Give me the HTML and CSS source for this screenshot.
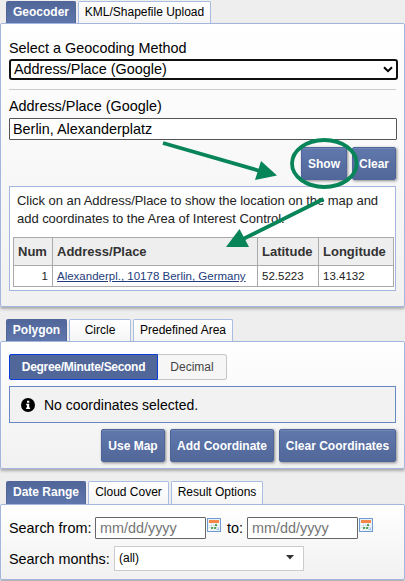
FILE: index.html
```html
<!DOCTYPE html>
<html lang="en">
<head>
<meta charset="utf-8">
<title>Search Criteria</title>
<link rel="stylesheet" href="styles.css">
</head>
<body>
<svg class="defs" width="0" height="0" aria-hidden="true">
  <symbol id="calendar" viewBox="0 0 14 14">
    <rect x=".5" y=".5" width="13" height="13" fill="#e8f0f9" stroke="#709bcf"/>
    <rect x="2" y="2" width="10" height="3" fill="#f58848"/>
    <path d="M2 5.500h10v5L10.500 12H2z" fill="#fff"/>
    <path d="M2 7.500h10M2 9.500h10M4.500 5v7M7 5v7M9.500 5v7" stroke="#b9cee4" stroke-width=".6"/>
    <path d="M8 6h2v2H8zM4 9h2v2H4zM7 9h2v2H7z" fill="#55a553"/>
    <path d="M12 9.500V12H9.500z" fill="#9dbde3"/>
  </symbol>
</svg>
<main class="page">
  <section class="group geocoder">
    <nav class="tabs">
      <a class="tab active t-geo">Geocoder</a><a class="tab t-kml">KML/Shapefile Upload</a>
    </nav>
    <div class="panel">
      <label class="label">Select a Geocoding Method</label>
      <div class="method"><span>Address/Place (Google)</span>
        <svg width="10" height="7" viewBox="0 0 10 7"><path d="M1 1.200 5 5.200 9 1.200" fill="none" stroke="#000" stroke-width="2"/></svg>
      </div>
      <div class="rule"></div>
      <label class="label">Address/Place (Google)</label>
      <div class="field">Berlin, Alexanderplatz</div>
      <div class="actions"><button class="btn b-show">Show</button><button class="btn b-clear">Clear</button></div>
      <div class="results">
        <p>Click on an Address/Place to show the location on the map and<br>add coordinates to the Area of Interest Control.</p>
        <table>
          <colgroup><col class="c-num"><col class="c-place"><col class="c-lat"><col class="c-lon"></colgroup>
          <tr><th>Num</th><th>Address/Place</th><th>Latitude</th><th>Longitude</th></tr>
          <tr><td class="num">1</td><td><a class="place">Alexanderpl., 10178 Berlin, Germany</a></td><td>52.5223</td><td>13.4132</td></tr>
        </table>
      </div>
    </div>
  </section>

  <section class="group area">
    <nav class="tabs">
      <a class="tab active t-poly">Polygon</a><a class="tab t-circle">Circle</a><a class="tab t-pre">Predefined Area</a>
    </nav>
    <div class="panel">
      <div class="toggle"><span class="on">Degree/Minute/Second</span><span class="off">Decimal</span></div>
      <div class="notice">
        <svg width="14" height="14" viewBox="0 0 14 14"><circle cx="7" cy="7" r="7"/><path d="M6 2.800h2.300v2H6zM5.200 5.700h3v3.800h.900V11H5.100V9.500H6V7.200h-.8z" fill="#fff"/></svg>
        <span>No coordinates selected.</span>
      </div>
      <div class="actions"><button class="btn b-map">Use Map</button><button class="btn b-add">Add Coordinate</button><button class="btn b-clearall">Clear Coordinates</button></div>
    </div>
  </section>

  <section class="group dates">
    <nav class="tabs">
      <a class="tab active t-date">Date Range</a><a class="tab t-cloud">Cloud Cover</a><a class="tab t-result">Result Options</a>
    </nav>
    <div class="panel">
      <div class="row range">
        <label class="l-from">Search from:</label><div class="date">mm/dd/yyyy</div><svg class="cal" width="14" height="14"><use href="#calendar"/></svg>
        <label class="l-to">to:</label><div class="date">mm/dd/yyyy</div><svg class="cal" width="14" height="14"><use href="#calendar"/></svg>
      </div>
      <div class="row">
        <label class="l-months">Search months:</label>
        <div class="months"><span>(all)</span><svg width="8" height="5" viewBox="0 0 8 5"><path d="M0 0h8L4 4.500z" fill="#333"/></svg></div>
      </div>
    </div>
  </section>
  <svg class="annotation" width="405" height="581" viewBox="0 0 405 581" aria-hidden="true">
    <g fill="none" stroke="#078458" stroke-width="3.800">
      <path d="M163 143 260 171"/>
      <path d="M323.500 199 241 240"/>
      <ellipse cx="324.300" cy="163.500" rx="32.300" ry="23.500"/>
    </g>
    <path d="M261 161 277 175.500 255 180zM239.500 229 226 247 249 247z" fill="#078458"/>
  </svg>
</main>
</body>
</html>
```
FILE: styles.css
```css
* { box-sizing: border-box; }
body { margin: 0; background: #eee; color: #000; font-family: "Liberation Sans", Arial, sans-serif; font-size: 14.4px; }
.defs { position: absolute; }
.page { position: relative; width: 405px; height: 581px; overflow: hidden; padding-top: 1px; white-space: nowrap; }
.tabs { display: flex; gap: 2px; height: 22px; padding-left: 6px; }
.tab { height: 22px; border: 1px solid #a9bce2; border-bottom: 0; border-radius: 2px 2px 0 0; background: linear-gradient(#fff, #f5f5f5); font-size: 12px; line-height: 20px; text-align: center; }
.tab.active { background: linear-gradient(#51679a, #5f76ac); border-color: #51679a; color: #fff; font-weight: bold; }
.t-geo { width: 70px; }
.t-kml { width: 133px; }
.t-poly { width: 61px; }
.t-circle { width: 62px; }
.t-pre { width: 100px; }
.t-date { width: 80px; }
.t-cloud { width: 81px; }
.t-result { width: 92px; }
.panel { border: 1px solid #a4b6de; border-radius: 2px; padding: 0 8px; background: linear-gradient(#fff, #f1f1f2); box-shadow: 0 2px 3px #aaa; }
.geocoder .panel { height: 284px; padding-top: 14px; }
.area { margin-top: 12px; }
.area .panel { height: 128px; padding-top: 12px; }
.dates { margin-top: 12px; }
.dates .tabs, .dates .tab { height: 23px; }
.dates .panel { height: 76px; padding-top: 12px; }
.label { display: block; height: 20px; line-height: 20px; }
.method { display: flex; align-items: center; justify-content: space-between; width: 389px; height: 21px; margin-top: 1px; padding: 0 3px; border: 2px solid #101010; border-radius: 3px; background: #fff; line-height: 17px; }
.rule { height: 1px; margin: 9px 0 6px; background: #ccc; }
.field { width: 388px; height: 22px; margin-top: 2px; border: 1px solid #555; border-radius: 1px; padding-left: 3px; background: #fff; line-height: 20px; }
.actions { display: flex; justify-content: flex-end; gap: 5px; height: 33px; margin-top: 7px; width: 387px; }
.btn { height: 33px; padding: 0; border: 1px solid #4f6599; border-radius: 2px; background: linear-gradient(#6078ac, #51679a); box-shadow: inset 0 1px #7086b5, 1px 1px 3px #888; color: #fff; font: bold 12px "Liberation Sans", Arial, sans-serif; }
.b-show { width: 46px; }
.b-clear { width: 44px; }
.b-map { width: 64px; }
.b-add { width: 104px; }
.b-clearall { width: 117px; }
.results { width: 387px; height: 105px; margin-top: 6px; padding: 5px 3px 0; border: 1px solid #a4b6de; background: #fff; }
.results p { margin: 0 0 9px; padding-left: 4px; color: #222; font-size: 13px; letter-spacing: -.04px; line-height: 18px; }
table { width: 380px; table-layout: fixed; border-collapse: collapse; font-size: 12px; }
.c-num { width: 39px; }
.c-place { width: 205px; }
.c-lat { width: 61px; }
.c-lon { width: 75px; }
th, td { border: 1px solid #aaa; padding: 0 4px; text-align: left; color: #222; }
th { height: 28px; background: #eee; color: #333; font-size: 13px; }
td { height: 21px; font-size: 11.5px; }
td.num { text-align: right; }
.place { color: #233c7b; text-decoration: underline; }
.toggle { display: flex; height: 26px; font-size: 12px; line-height: 24px; text-align: center; }
.on { width: 149px; border: 1px solid #0b3ed8; border-radius: 2px 0 0 2px; background: #51679a; color: #fff; font-weight: bold; letter-spacing: -.3px; }
.off { width: 69px; border: 1px solid #c5c5c5; border-left: 0; border-radius: 0 3px 3px 0; background: #f6f6f6; color: #454545; }
.notice { display: flex; align-items: center; gap: 9px; width: 387px; height: 37px; margin-top: 6px; padding-left: 11px; border: 1px solid #6787c5; background: #f2f2f2; font-size: 14px; }
.area .actions { margin-top: 6px; }
.row { display: flex; align-items: center; height: 25px; }
.range { height: 22px; margin-bottom: 7px; }
.l-from { width: 86px; }
.l-to { width: 26px; padding-left: 6px; }
.l-months { width: 105px; }
.date { width: 111px; height: 22px; border: 1px solid #666; border-radius: 1px; padding-left: 4px; background: #fff; color: #757575; line-height: 20px; }
.cal { align-self: flex-start; margin: 1px 0 0 1px; }
.months { display: flex; align-items: center; justify-content: space-between; width: 190px; height: 25px; padding: 0 9px 2px 4px; border: 1px solid #ccc; background: #fff; font-size: 12px; }
.annotation { position: absolute; left: 0; top: 0; pointer-events: none; }
```
